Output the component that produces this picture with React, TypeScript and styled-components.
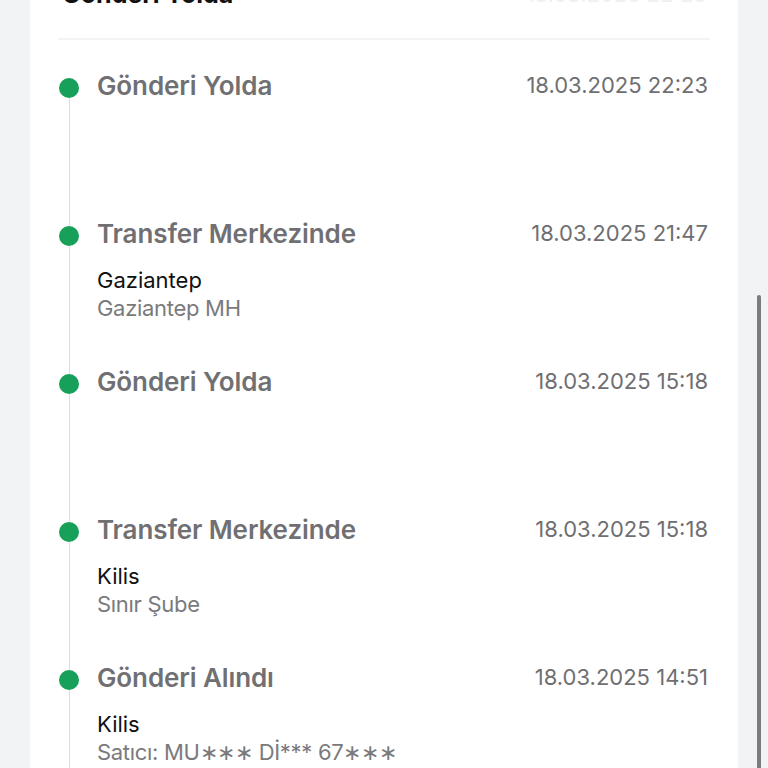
import React from 'react'
import styled, { createGlobalStyle } from 'styled-components'

const GlobalStyle = createGlobalStyle`
  html, body {
    margin: 0;
    padding: 0;
    background: #f2f3f5;
    font-family: Inter, "Noto Sans", "Liberation Sans", sans-serif;
    overflow: hidden;
  }
`

type Event = {
  title: string
  date: string
  city?: string
  detail?: string
}

const events: Event[] = [
  { title: 'Gönderi Yolda', date: '18.03.2025 22:23' },
  { title: 'Transfer Merkezinde', date: '18.03.2025 21:47', city: 'Gaziantep', detail: 'Gaziantep MH' },
  { title: 'Gönderi Yolda', date: '18.03.2025 15:18' },
  { title: 'Transfer Merkezinde', date: '18.03.2025 15:18', city: 'Kilis', detail: 'Sınır Şube' },
  { title: 'Gönderi Alındı', date: '18.03.2025 14:51', city: 'Kilis', detail: 'Satıcı: MU∗∗∗ Dİ*** 67∗∗∗' },
]

const App: React.FC = () => {
  return (
    <>
      <GlobalStyle />
      <Page>
        <Card>
          <Header>
            <HeaderTitle>Gönderi Yolda</HeaderTitle>
            <HeaderDate>18.03.2025 22:23</HeaderDate>
          </Header>
          <Divider />
          <Timeline>
            {events.map((ev, i) => (
              <Item key={i}>
                <Rail>
                  <Dot />
                  <Line />
                </Rail>
                <Body>
                  <TitleRow>
                    <Title>{ev.title}</Title>
                    <DateText>{ev.date}</DateText>
                  </TitleRow>
                  {ev.city && <City>{ev.city}</City>}
                  {ev.detail && <Detail>{ev.detail}</Detail>}
                </Body>
              </Item>
            ))}
          </Timeline>
        </Card>
      </Page>
      <ScrollThumb />
    </>
  )
}

const Page = styled.div`
  padding: 0 30px;
  height: 768px;
  overflow: hidden;
`

const Card = styled.div`
  background: #ffffff;
  margin-top: -23px;
  padding: 0 28px 0 28px;
  min-height: 1000px;
`

const Header = styled.div`
  display: flex;
  justify-content: space-between;
  align-items: center;
  height: 34px;
  padding: 0 3px 0 4px;
`

const HeaderTitle = styled.div`
  font-size: 25px;
  font-weight: 700;
  color: #111111;
`

const HeaderDate = styled.div`
  font-size: 22px;
  color: #f0f0f2;
`

const Divider = styled.div`
  height: 2px;
  background: #f3f3f5;
  margin: 27px 0 0;
`

const Timeline = styled.div`
  display: flex;
  flex-direction: column;
  padding-top: 30px;
`

const Item = styled.div`
  display: flex;
  min-height: 148px;
`

const Rail = styled.div`
  width: 22px;
  display: flex;
  flex-direction: column;
  align-items: center;
  padding-top: 8px;
`

const Dot = styled.div`
  width: 20px;
  height: 20px;
  border-radius: 50%;
  background: #17a05a;
  flex-shrink: 0;
`

const Line = styled.div`
  width: 1px;
  flex: 1;
  background: #dcdcdf;
  margin-bottom: -8px;
`

const Body = styled.div`
  flex: 1;
  padding-left: 17px;
  display: flex;
  flex-direction: column;
`

const TitleRow = styled.div`
  display: flex;
  justify-content: space-between;
  align-items: center;
  height: 30px;
  margin-bottom: 18px;
`

const Title = styled.div`
  font-size: 26px;
  font-weight: 600;
  color: #707073;
  letter-spacing: -0.1px;
`

const DateText = styled.div`
  font-size: 22px;
  color: #6f6f72;
  padding-right: 2px;
`

const City = styled.div`
  font-size: 22px;
  color: #111111;
  line-height: 28px;
`

const Detail = styled.div`
  font-size: 22px;
  color: #7a7a7d;
  line-height: 28px;
  letter-spacing: -0.3px;
`

const ScrollThumb = styled.div`
  position: fixed;
  left: 757px;
  top: 295px;
  width: 4px;
  height: 480px;
  border-radius: 2px;
  background: #7c7c7e;
`

export default App
